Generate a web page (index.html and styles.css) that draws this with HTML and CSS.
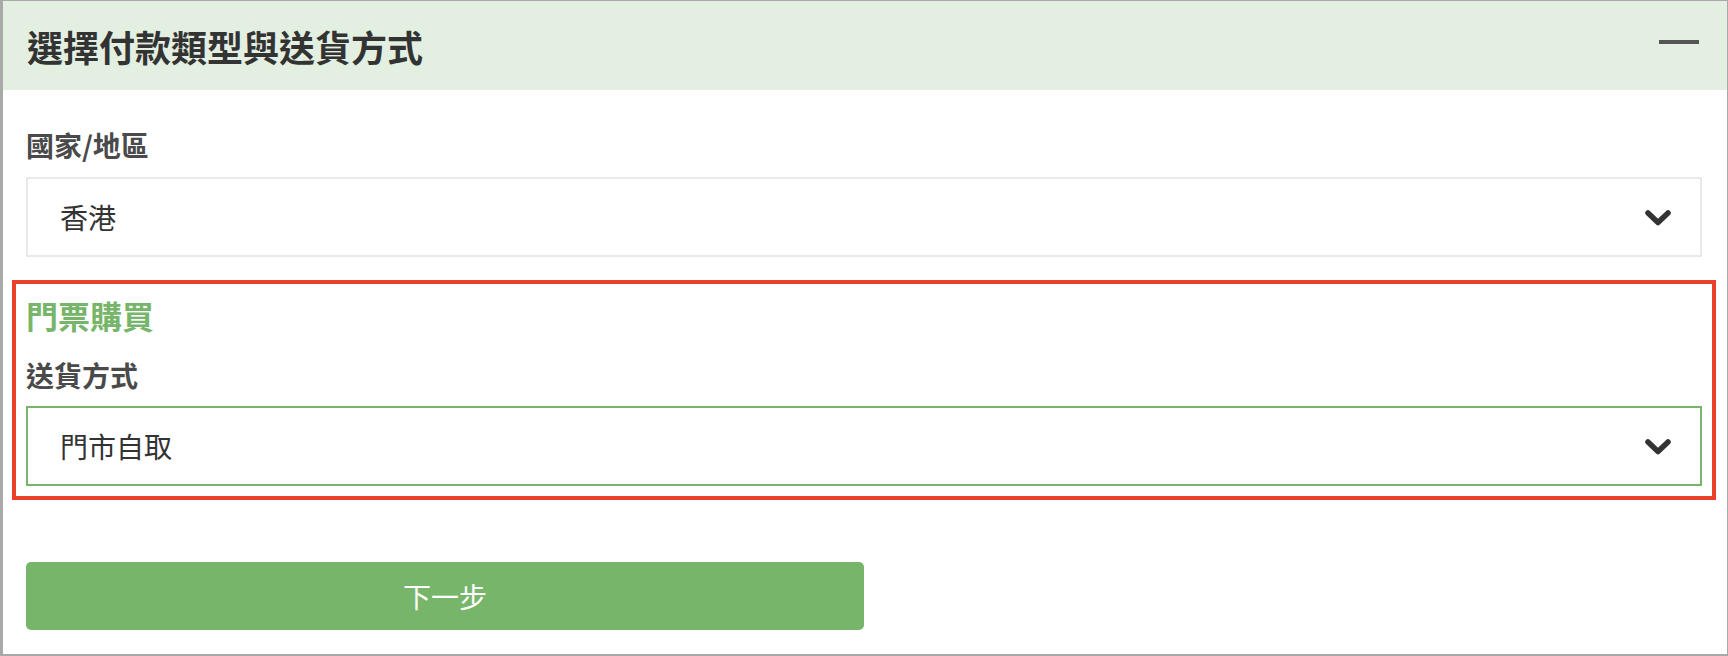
FILE: index.html
```html
<!DOCTYPE html>
<html lang="zh-Hant">
<head>
<meta charset="utf-8">
<title>選擇付款類型與送貨方式</title>
<link rel="stylesheet" href="styles.css">
</head>
<body>
<div class="panel">
  <div class="panel-header">
    <h2 class="panel-title">選擇付款類型與送貨方式</h2>
    <span class="collapse-icon"></span>
  </div>
  <div class="panel-body">
    <div class="field-label">國家/地區</div>
    <div class="select-box">
      <span>香港</span>
      <svg class="chevron" viewBox="0 0 26 17" width="26" height="17"><polyline points="3,3 13,12.5 23,3" fill="none" stroke="#333" stroke-width="5.5" stroke-linecap="round" stroke-linejoin="round"/></svg>
    </div>
    <div class="section">
      <div class="section-title">門票購買</div>
      <div class="field-label field-label-2">送貨方式</div>
      <div class="select-box select-active">
        <span>門市自取</span>
        <svg class="chevron" viewBox="0 0 26 17" width="26" height="17"><polyline points="3,3 13,12.5 23,3" fill="none" stroke="#333" stroke-width="5.5" stroke-linecap="round" stroke-linejoin="round"/></svg>
      </div>
    </div>
    <button class="next-btn" type="button">下一步</button>
  </div>
</div>
</body>
</html>
```

FILE: styles.css
```css
html, body {
  margin: 0;
  padding: 0;
  background: #fff;
}

body {
  font-family: "Noto Sans CJK TC", "Noto Sans", sans-serif;
}

.panel {
  width: 1728px;
  height: 656px;
  box-sizing: border-box;
  border-style: solid;
  border-color: #a9a9a9;
  border-width: 1px 1px 2px 3px;
  background: #fff;
  overflow: hidden;
}

.panel-header {
  height: 89px;
  background: #e3efe1;
  display: flex;
  align-items: center;
  justify-content: space-between;
  padding: 0 28px 0 24px;
}

.panel-title {
  margin: 0;
  font-size: 36px;
  font-weight: 700;
  color: #333;
  line-height: 48px;
}

.collapse-icon {
  display: block;
  width: 40px;
  height: 4px;
  background: #555;
  margin-bottom: 7px;
}

.panel-body {
  padding: 35px 25px 24px 23px;
}

.field-label {
  font-size: 28px;
  line-height: 40px;
  font-weight: 700;
  color: #4a4a4a;
  margin-bottom: 12px;
}

.field-label-2 {
  margin-bottom: 11px;
}

.select-box {
  height: 80px;
  box-sizing: border-box;
  border: 2px solid #e9e9e9;
  display: flex;
  align-items: center;
  justify-content: space-between;
  padding: 0 29px 0 32px;
  font-size: 28px;
  color: #333;
}

.select-active {
  border-color: #77b66a;
}

.chevron {
  display: block;
  margin-top: 2px;
}

.section {
  margin-top: 37px;
  outline: 4px solid #e8402b;
  outline-offset: 10px;
}

.section-title {
  font-size: 32px;
  line-height: 42px;
  font-weight: 700;
  color: #77b66a;
  margin-bottom: 19px;
}

.next-btn {
  display: block;
  margin-top: 76px;
  width: 838px;
  height: 68px;
  border: none;
  border-radius: 5px;
  background: #77b66a;
  color: #fff;
  font-family: "Noto Sans CJK TC", "Noto Sans", sans-serif;
  font-size: 28px;
  padding: 0;
  cursor: pointer;
}
```
